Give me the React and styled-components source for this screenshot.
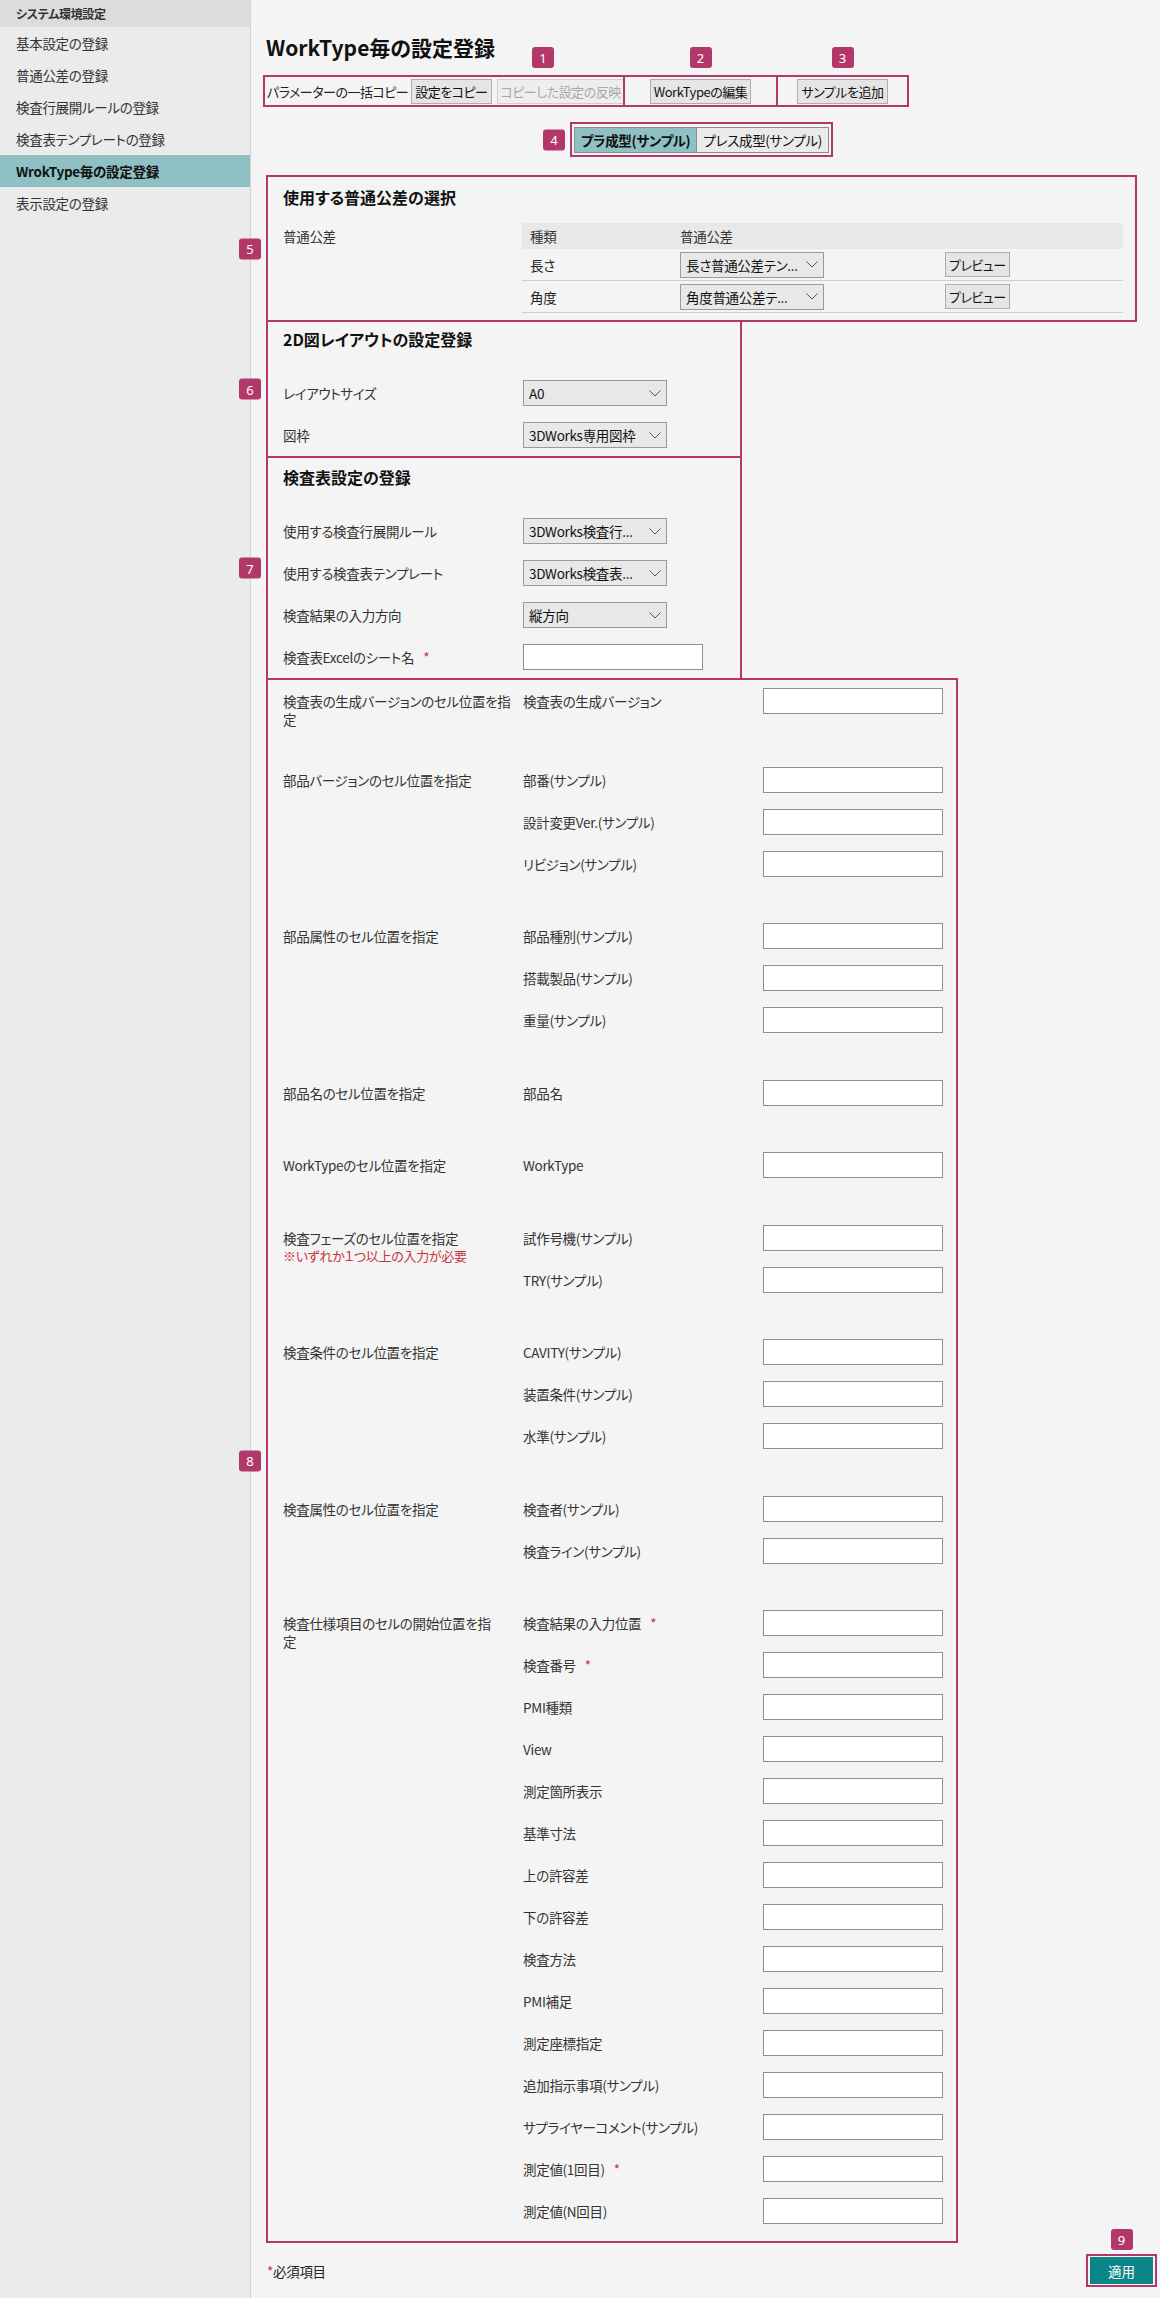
import React from "react";
import styled, { createGlobalStyle, css } from "styled-components";

const MAGENTA = "#b3386a";

const GlobalStyle = createGlobalStyle`
  * { box-sizing: border-box; }
  html, body { margin: 0; padding: 0; }
  body {
    background: #f4f4f4;
    color: #222;
    font-family: "Noto Sans CJK JP", "Noto Sans", sans-serif;
    font-size: 13.5px;
    letter-spacing: -0.3px;
    font-feature-settings: "palt";
  }
`;

const Page = styled.div`
  display: flex;
  min-height: 100vh;
`;

const Sidebar = styled.nav`
  width: 251px;
  flex-shrink: 0;
  background: #ebebeb;
  border-right: 1px solid #d3d3d3;
`;

const SideHeader = styled.div`
  height: 27px;
  display: flex;
  align-items: center;
  padding-left: 16px;
  background: #dcdcdc;
  font-size: 12px;
  font-weight: 700;
  color: #333;
`;

const SideItem = styled.div`
  height: 32px;
  display: flex;
  align-items: center;
  padding-left: 16px;
  font-size: 13.5px;
  color: ${(p) => (p.$active ? "#111" : "#333")};
  font-weight: ${(p) => (p.$active ? 700 : 400)};
  background: ${(p) => (p.$active ? "#8fc0c4" : "transparent")};
`;

const Main = styled.main`
  flex: 1;
  display: flex;
  flex-direction: column;
  align-items: flex-start;
  padding: 33px 3px 13px 15px;
`;

const Title = styled.h1`
  margin: 0;
  font-size: 21px;
  line-height: 28px;
  font-weight: 700;
  letter-spacing: 0;
  color: #111;
`;

const ToolRow = styled.div`
  display: flex;
  margin: 14px 0 0 -3px;
`;

const AnnotBox = styled.div`
  position: relative;
  display: flex;
  align-items: center;
  justify-content: ${(p) => (p.$center ? "center" : "flex-start")};
  width: ${(p) => p.$w}px;
  height: 32px;
  padding: 0 2px;
  border: 2px solid ${MAGENTA};
  & + & {
    margin-left: -2px;
  }
`;

const Badge = styled.span`
  position: absolute;
  width: 22px;
  height: 21px;
  display: flex;
  align-items: center;
  justify-content: center;
  background: ${MAGENTA};
  color: #fff;
  font-family: "Noto Sans", sans-serif;
  font-size: 13px;
  letter-spacing: 0;
  border-radius: 3px;
  ${(p) =>
    p.$side === "left"
      ? css`
          right: calc(100% + 7px);
          top: 50%;
          transform: translateY(-50%);
        `
      : css`
          bottom: calc(100% + ${p.$gap ?? 9}px);
          left: ${p.$x ?? "50%"};
          transform: translateX(-50%);
        `}
`;

const CopyLabel = styled.span`
  white-space: nowrap;
  margin-right: 3px;
  font-size: 13px;
  letter-spacing: -0.5px;
  color: #222;
`;

const Button = styled.button`
  height: 25px;
  padding: 0 3px;
  font-family: inherit;
  font-size: 13px;
  letter-spacing: -0.5px;
  font-feature-settings: "palt";
  white-space: nowrap;
  color: #111;
  background: #e5e5e5;
  border: 1px solid #adadad;
  &:disabled {
    color: #a8a8a8;
    background: #eeeeee;
    border-color: #cfcfcf;
  }
  & + & {
    margin-left: 5px;
  }
`;

const TabArea = styled.div`
  width: 871px;
  display: flex;
  justify-content: center;
  margin-top: 15px;
`;

const TabBox = styled.div`
  position: relative;
  border: 2px solid ${MAGENTA};
  padding: 3px 2px 2px;
`;

const TabGroup = styled.div`
  display: flex;
  border: 1px solid #8c8c8c;
`;

const Tab = styled.div`
  height: 24px;
  display: flex;
  align-items: center;
  padding: 0 6px;
  white-space: nowrap;
  color: #111;
  font-weight: ${(p) => (p.$active ? 700 : 400)};
  background: ${(p) => (p.$active ? "#8fc0c4" : "#ebebeb")};
  & + & {
    border-left: 1px solid #8c8c8c;
  }
`;

const Section = styled.section`
  position: relative;
  width: ${(p) => p.$w}px;
  margin-top: ${(p) => p.$mt}px;
  padding: ${(p) => p.$pt}px 12px ${(p) => p.$pb}px 15px;
  border: 2px solid ${MAGENTA};
`;

const SectionHeading = styled.h2`
  margin: 0 0 ${(p) => p.$mb}px;
  font-size: 16px;
  line-height: 22px;
  font-weight: 700;
  letter-spacing: 0;
  color: #111;
`;

const TolGrid = styled.div`
  display: grid;
  grid-template-columns: 239px 601px;
  align-items: start;
`;

const TolLabel = styled.div`
  line-height: 26px;
  color: #333;
`;

const TolTable = styled.div`
  display: grid;
  grid-template-columns: 150px 265px 186px;
`;

const TolHead = styled.div`
  height: 26px;
  display: flex;
  align-items: center;
  padding: 0 8px;
  background: #e8e8e8;
  color: #333;
`;

const TolCell = styled.div`
  height: 32px;
  display: flex;
  align-items: center;
  padding: 0 8px;
  border-bottom: 1px solid #cfcfcf;
  color: #222;
`;

const FieldRow = styled.div`
  display: grid;
  grid-template-columns: 240px auto;
  align-items: center;
  height: 42px;
`;

const FieldLabel = styled.div`
  color: #333;
  white-space: nowrap;
`;

const Req = styled.span`
  color: #c0303e;
  margin-left: 9px;
`;

const SelectBox = styled.div`
  width: 144px;
  height: 26px;
  display: flex;
  align-items: center;
  padding: 0 5px 0 5px;
  background: #e8e8e8;
  border: 1px solid #9a9a9a;
  color: #111;
`;

const SelectText = styled.span`
  flex: 1;
  min-width: 0;
  overflow: hidden;
  white-space: nowrap;
  text-overflow: ellipsis;
`;

const ChevronSvg = styled.svg`
  flex-shrink: 0;
  margin-left: 6px;
`;

const TextInput = styled.input`
  width: 180px;
  height: 26px;
  padding: 0 4px;
  background: #fff;
  border: 1px solid #8f8f8f;
  font-family: inherit;
  font-size: 13.5px;
  outline: none;
`;

const Group = styled.div`
  display: grid;
  grid-template-columns: 240px 1fr;
  & + & {
    margin-top: 30.5px;
  }
`;

const GroupLabel = styled.div`
  padding-top: 12px;
  line-height: 18px;
  white-space: nowrap;
  color: #333;
`;

const Note = styled.div`
  color: #c8333a;
  font-size: 13px;
  line-height: 18px;
`;

const SubRow = styled.div`
  display: grid;
  grid-template-columns: 240px 180px;
  align-items: center;
  height: 42px;
`;

const Footer = styled.div`
  align-self: stretch;
  display: flex;
  justify-content: space-between;
  align-items: center;
  margin-top: 11px;
`;

const RequiredNote = styled.div`
  color: #222;
  padding-left: 1px;
`;

const Star = styled.span`
  color: #c0303e;
`;

const ApplyBox = styled.div`
  position: relative;
  border: 2px solid ${MAGENTA};
  padding: 1px 2px;
`;

const ApplyButton = styled.button`
  display: block;
  width: 63px;
  height: 27px;
  border: none;
  background: #0c8589;
  color: #fff;
  font-family: inherit;
  font-size: 13.5px;
`;

const Chevron = () => (
  <ChevronSvg width="12" height="7" viewBox="0 0 12 7">
    <polyline points="0.5,0.5 6,6 11.5,0.5" fill="none" stroke="#555" strokeWidth="1" />
  </ChevronSvg>
);

const Select = ({ children }) => (
  <SelectBox>
    <SelectText>{children}</SelectText>
    <Chevron />
  </SelectBox>
);

const sideItems = [
  "基本設定の登録",
  "普通公差の登録",
  "検査行展開ルールの登録",
  "検査表テンプレートの登録",
  "WrokType毎の設定登録",
  "表示設定の登録",
];

const groups = [
  { label: ["検査表の生成バージョンのセル位置を指", "定"], rows: ["検査表の生成バージョン"] },
  { label: ["部品バージョンのセル位置を指定"], rows: ["部番(サンプル)", "設計変更Ver.(サンプル)", "リビジョン(サンプル)"] },
  { label: ["部品属性のセル位置を指定"], rows: ["部品種別(サンプル)", "搭載製品(サンプル)", "重量(サンプル)"] },
  { label: ["部品名のセル位置を指定"], rows: ["部品名"] },
  { label: ["WorkTypeのセル位置を指定"], rows: ["WorkType"] },
  {
    label: ["検査フェーズのセル位置を指定"],
    note: "※いずれか１つ以上の入力が必要",
    rows: ["試作号機(サンプル)", "TRY(サンプル)"],
  },
  { label: ["検査条件のセル位置を指定"], rows: ["CAVITY(サンプル)", "装置条件(サンプル)", "水準(サンプル)"] },
  { label: ["検査属性のセル位置を指定"], rows: ["検査者(サンプル)", "検査ライン(サンプル)"] },
  {
    label: ["検査仕様項目のセルの開始位置を指", "定"],
    rows: [
      { t: "検査結果の入力位置", req: true },
      { t: "検査番号", req: true },
      "PMI種類",
      "View",
      "測定箇所表示",
      "基準寸法",
      "上の許容差",
      "下の許容差",
      "検査方法",
      "PMI補足",
      "測定座標指定",
      "追加指示事項(サンプル)",
      "サプライヤーコメント(サンプル)",
      { t: "測定値(1回目)", req: true },
      "測定値(N回目)",
    ],
  },
];

export default function App() {
  return (
    <>
      <GlobalStyle />
      <Page>
        <Sidebar>
          <SideHeader>システム環境設定</SideHeader>
          {sideItems.map((s, i) => (
            <SideItem key={s} $active={i === 4}>
              {s}
            </SideItem>
          ))}
        </Sidebar>
        <Main>
          <Title>WorkType毎の設定登録</Title>
          <ToolRow>
            <AnnotBox $w={362}>
              <Badge $x="278px">1</Badge>
              <CopyLabel>パラメーターの一括コピー</CopyLabel>
              <Button>設定をコピー</Button>
              <Button disabled>コピーした設定の反映</Button>
            </AnnotBox>
            <AnnotBox $w={155} $center>
              <Badge>2</Badge>
              <Button>WorkTypeの編集</Button>
            </AnnotBox>
            <AnnotBox $w={133} $center>
              <Badge>3</Badge>
              <Button>サンプルを追加</Button>
            </AnnotBox>
          </ToolRow>

          <TabArea>
            <TabBox>
              <Badge $side="left">4</Badge>
              <TabGroup>
                <Tab $active>プラ成型(サンプル)</Tab>
                <Tab>プレス成型(サンプル)</Tab>
              </TabGroup>
            </TabBox>
          </TabArea>

          <Section $w={871} $mt={18} $pt={9} $pb={7}>
            <Badge $side="left">5</Badge>
            <SectionHeading $mb={15}>使用する普通公差の選択</SectionHeading>
            <TolGrid>
              <TolLabel>普通公差</TolLabel>
              <TolTable>
                <TolHead>種類</TolHead>
                <TolHead>普通公差</TolHead>
                <TolHead />
                <TolCell>長さ</TolCell>
                <TolCell>
                  <Select>長さ普通公差テン...</Select>
                </TolCell>
                <TolCell>
                  <Button>プレビュー</Button>
                </TolCell>
                <TolCell>角度</TolCell>
                <TolCell>
                  <Select>角度普通公差テ...</Select>
                </TolCell>
                <TolCell>
                  <Button>プレビュー</Button>
                </TolCell>
              </TolTable>
            </TolGrid>
          </Section>

          <Section $w={476} $mt={-2} $pt={6} $pb={0}>
            <Badge $side="left">6</Badge>
            <SectionHeading $mb={22}>2D図レイアウトの設定登録</SectionHeading>
            <FieldRow>
              <FieldLabel>レイアウトサイズ</FieldLabel>
              <Select>A0</Select>
            </FieldRow>
            <FieldRow>
              <FieldLabel>図枠</FieldLabel>
              <Select>3DWorks専用図枠</Select>
            </FieldRow>
          </Section>

          <Section $w={476} $mt={-2} $pt={8} $pb={0}>
            <Badge $side="left">7</Badge>
            <SectionHeading $mb={22}>検査表設定の登録</SectionHeading>
            <FieldRow>
              <FieldLabel>使用する検査行展開ルール</FieldLabel>
              <Select>3DWorks検査行...</Select>
            </FieldRow>
            <FieldRow>
              <FieldLabel>使用する検査表テンプレート</FieldLabel>
              <Select>3DWorks検査表...</Select>
            </FieldRow>
            <FieldRow>
              <FieldLabel>検査結果の入力方向</FieldLabel>
              <Select>縦方向</Select>
            </FieldRow>
            <FieldRow>
              <FieldLabel>
                検査表Excelのシート名<Req>*</Req>
              </FieldLabel>
              <TextInput />
            </FieldRow>
          </Section>

          <Section $w={692} $mt={-2} $pt={0} $pb={9}>
            <Badge $side="left">8</Badge>
            {groups.map((g) => (
              <Group key={g.label.join("")}>
                <GroupLabel>
                  {g.label.map((line, i) => (
                    <React.Fragment key={line}>
                      {i > 0 && <br />}
                      {line}
                    </React.Fragment>
                  ))}
                  {g.note && <Note>{g.note}</Note>}
                </GroupLabel>
                <div>
                  {g.rows.map((r) => {
                    const t = typeof r === "string" ? r : r.t;
                    const req = typeof r === "string" ? false : r.req;
                    return (
                      <SubRow key={t}>
                        <FieldLabel>
                          {t}
                          {req && <Req>*</Req>}
                        </FieldLabel>
                        <TextInput />
                      </SubRow>
                    );
                  })}
                </div>
              </Group>
            ))}
          </Section>

          <Footer>
            <RequiredNote>
              <Star>*</Star>必須項目
            </RequiredNote>
            <ApplyBox>
              <Badge $gap={6}>9</Badge>
              <ApplyButton>適用</ApplyButton>
            </ApplyBox>
          </Footer>
        </Main>
      </Page>
    </>
  );
}
